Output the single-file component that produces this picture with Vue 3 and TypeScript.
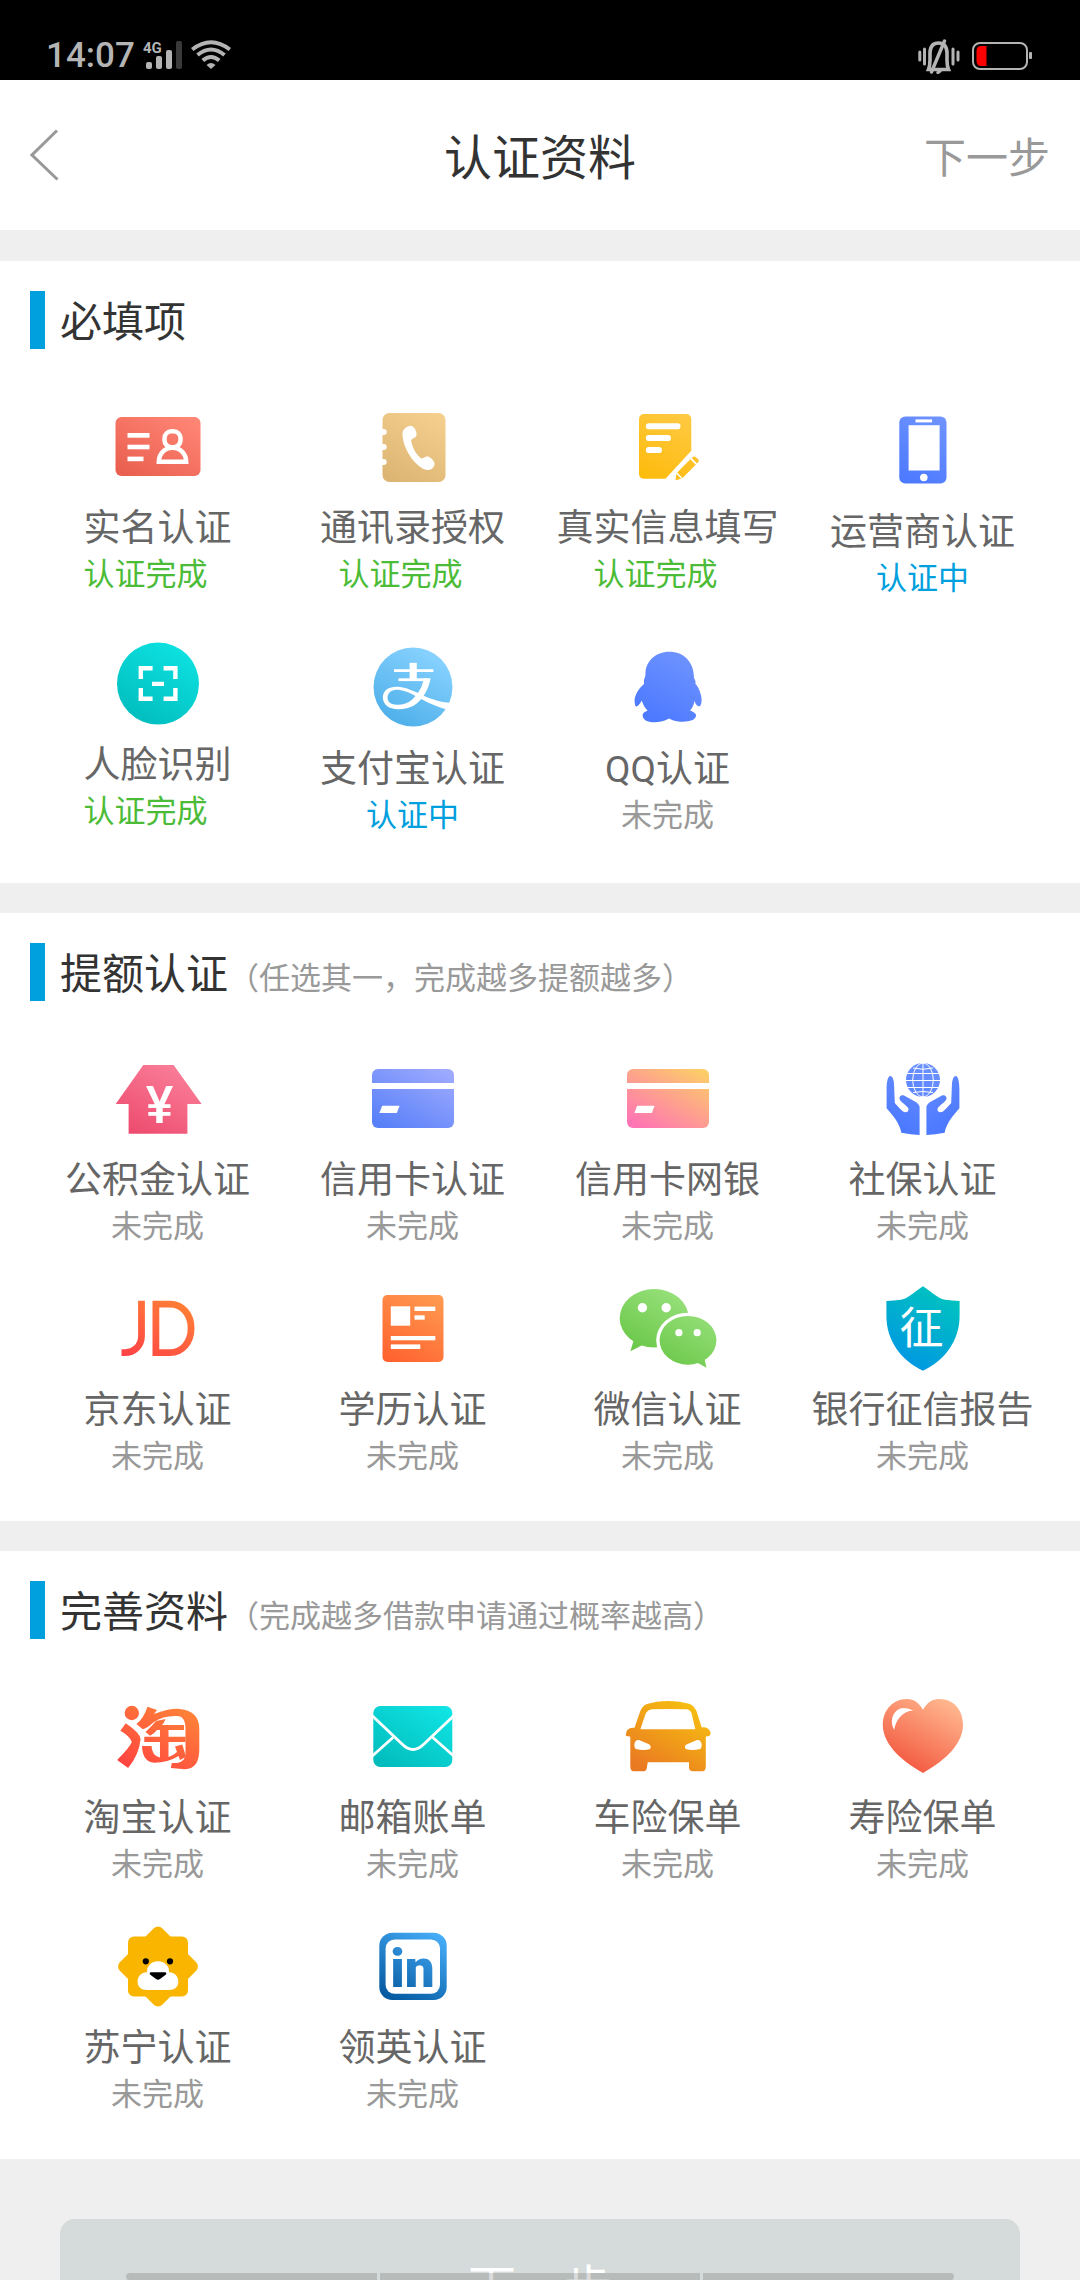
<script setup lang="ts">
type Status = 'done' | 'pending' | 'todo'

interface Icon {
  from: string
  to: string
  body: string
}

interface Item {
  icon: string
  label: string
  status: Status
}

interface Section {
  title: string
  note?: string
  items: Item[]
}

const statusText: Record<Status, string> = {
  done: '认证完成',
  pending: '认证中',
  todo: '未完成',
}

const cardBody = `
  <rect x="9" y="20" width="82" height="59" rx="6"/>
  <g fill="#fff"><rect x="8" y="34" width="84" height="6"/><path d="M19.2 56.7H36.6L33.8 64H16.4z"/></g>`

const hand =
  'M17.4 27C14.5 27 13.6 34 13.6 41V59.3C20 67 26 73 28.4 83.7Q38 85.7 46.6 86V57.7Q46 54.5 41 52L31 46.6C27.5 45.5 25.5 48.5 27 51C30 55 35 57 35.5 60C36 63 33 64 30 62.5Q26 59 21.8 54L21 34Q20 27 17.4 27z'

const icons: Record<string, Icon> = {
  idcard: {
    from: '#ea6050',
    to: '#ff8575',
    body: `<rect x="7.5" y="20" width="85" height="59" rx="6"/>
      <g fill="#fff"><rect x="19.5" y="36" width="22" height="4.7"/><rect x="19.5" y="47.7" width="22" height="4.6"/><rect x="19.5" y="59.6" width="16" height="4.6"/></g>
      <g fill="none" stroke="#fff" stroke-width="4.5"><rect x="56.5" y="34.2" width="16" height="16" rx="7"/><path d="M50.8 64.7C51 56.5 57 50.8 64.5 50.8S78 56.5 78.2 64.7z"/></g>`,
  },
  contacts: {
    from: '#dcb573',
    to: '#f5cf8e',
    body: `<rect x="19.5" y="16" width="63" height="69" rx="7"/>
      <g fill="#fff"><rect x="17" y="32" width="6.7" height="6" rx="3"/><rect x="17" y="47" width="6.7" height="6" rx="3"/><rect x="17" y="62" width="6.7" height="6" rx="3"/>
      <path d="M47.5 28.7C51 28.5 54 34 53.5 38.5C52 41.5 49 41 48.2 43.5C49 50 53 57 57.5 61C60 62.5 62 59.5 64.2 59.3C68 60 72.5 65 71.5 68C70 72 67 73.5 64.2 73C52 71 39 50 39.5 36C40 32 44 29 47.5 28.7z"/></g>`,
  },
  form: {
    from: '#fdbb0c',
    to: '#ffca45',
    body: `<path d="M26.5 17H67.8Q73.3 17 73.3 22.5V53.7L47.5 81.7H26.5Q21 81.7 21 76.2V22.5Q21 17 26.5 17z"/>
      <path d="M72.3 62.3L77.8 67.7L64.6 81L59.2 75.6zM73.6 61L75.4 59.8Q76.8 59 78.2 60.4L80.4 62.5Q81.4 63.8 80.4 65L79 66.5zM58.4 77L63.3 81.8L57.5 83.3z"/>
      <g fill="#fff"><rect x="27.9" y="26.2" width="34.6" height="6" rx="2.8"/><rect x="27.9" y="38" width="25" height="6" rx="2.8"/><rect x="27.9" y="50" width="16" height="6" rx="2.8"/></g>`,
  },
  phone: {
    from: '#4a78ff',
    to: '#7094ff',
    body: `<rect x="26.3" y="15.5" width="47.2" height="67" rx="6"/>
      <g fill="#fff"><rect x="35.6" y="24.2" width="31" height="45.3"/><rect x="42.5" y="18.4" width="16.6" height="3"/><circle cx="50.8" cy="76.5" r="3.8"/></g>`,
  },
  face: {
    from: '#02bfc0',
    to: '#0de0e0',
    body: `<circle cx="50" cy="49.6" r="41"/>
      <g fill="none" stroke="#fff" stroke-width="4.4"><path d="M44.6 34.2H32.8V45M55.6 34.2H67.4V45M44.6 64.8H32.8V54M55.6 64.8H67.4V54M44 49.9H56"/></g>`,
  },
  alipay: {
    from: '#4fb0ea',
    to: '#88d2ff',
    body: `<circle cx="50" cy="49" r="39.5"/>
      <g fill="#fff"><rect x="46.6" y="24.8" width="7.2" height="17"/><rect x="31" y="31.2" width="39.4" height="2.8"/><rect x="35.4" y="40.3" width="29" height="2.8"/>
      <path d="M60.5 40.3H67.6C66 50 60.5 61.5 51 67.5C43 72 29 72.5 24 68C18.5 63.5 18.5 55.5 23.5 51.5C31 46.5 42 48.5 57 56C67 61 77 64.3 88.5 65L83 71.2C74 69 63 64 53 58.3C41 51.5 31 49.8 26.5 54.5C23.3 58 24 63.5 28.5 65.8C35 68.2 44 66.2 49.5 61.2C55.5 55.5 59 49 60.5 42z"/></g>`,
  },
  qq: {
    from: '#4a78ff',
    to: '#7094ff',
    body: `<path d="M51 13.8C38 13.8 28 23 27.5 35Q27.8 38 26 42V46C20 51 16.5 58 16.6 63C16.8 67 17.5 69 18.5 68.5C21 67.5 22.5 65 23.8 62.5C25 67 27 70 29.6 72.5C26 74 24.6 75.5 24.6 77.5C25 83 31 84.2 37 84.2C44 84 47 82.5 51 80.5C55 82.5 58 83.7 65 83.7C72 83.5 77.5 82 78.2 77.5C78 75 75.5 74 72 72.5C74.5 70 75.8 67 76.4 63C77.5 66 79 68 81 68.5C83 68 83.6 65 83.6 61C83 55 80.5 49 77.5 46Q78.2 43 76 40C76 24 66 13.8 51 13.8z"/>`,
  },
  fund: {
    from: '#ee4d70',
    to: '#fa809a',
    body: `<path d="M35.3 16H65.6L93.6 55H79.4V84.7H20.6V55H7.7z"/>
      <text x="51.5" y="74" font-family="Roboto" font-weight="500" font-size="52" text-anchor="middle" fill="#fff">¥</text>`,
  },
  credit: { from: '#5880f8', to: '#9eaaff', body: cardBody },
  bank: { from: '#ff74b4', to: '#fccd68', body: cardBody },
  social: {
    from: '#4a78ff',
    to: '#7094ff',
    body: `<path d="${hand}"/><path transform="translate(100 0) scale(-1 1)" d="${hand}"/>
      <circle cx="50" cy="31" r="17"/>
      <g fill="none" stroke="#fff" stroke-width="1"><ellipse cx="50" cy="31" rx="10.3" ry="17"/><path d="M50 14V48M33 31.5H67M34 24.5H66M34 38.5H66M40 19Q50 21.5 60 19M40 43.5Q50 41.5 60 43.5"/></g>`,
  },
  jd: {
    from: '#ff4246',
    to: '#ff8434',
    body: `<g fill="none" stroke="url(#grad-jd)" stroke-width="6.8"><path d="M33.5 21.7V57C33.5 67 26 73.6 17 73.6H13.5"/><path d="M47.9 25.1H62C74.5 25.1 83.1 35.5 83.1 49.3C83.1 63 74.5 73.6 62 73.6H47.9z"/></g>`,
  },
  diploma: {
    from: '#ff622f',
    to: '#ff9a50',
    body: `<rect x="19.5" y="16" width="61" height="67" rx="5"/>
      <g fill="#fff"><rect x="27.8" y="27.3" width="19.4" height="19.4"/><rect x="51.5" y="27.6" width="20.8" height="4.4"/><rect x="51.5" y="36.3" width="10.2" height="4.4"/><rect x="27.8" y="57" width="44.5" height="4.3"/><rect x="27.8" y="65.4" width="29.5" height="4.6"/></g>`,
  },
  wechat: {
    from: '#68c646',
    to: '#9ae27e',
    body: `<ellipse cx="36.2" cy="39.2" rx="34.5" ry="29.2"/><path d="M15.5 61.7L12.4 72.3L24.1 66.3L26 58z"/>
      <ellipse cx="70" cy="61.3" rx="31.8" ry="27.6" fill="#fff"/>
      <ellipse cx="70" cy="61.3" rx="28.4" ry="24.4"/><path d="M86.4 79.5L88.5 88.7L79.9 84L78 78z"/>
      <g fill="#fff"><circle cx="24.4" cy="28.7" r="4.7"/><circle cx="48.2" cy="28.7" r="4.7"/><circle cx="60.9" cy="53.7" r="3.6"/><circle cx="79.2" cy="53.7" r="3.6"/></g>`,
  },
  report: {
    from: '#0098e2',
    to: '#00c2c0',
    body: `<path d="M50 7.3C58 12 64 19.5 72 20.7Q79 21.8 86.6 22V36C87 62 71 82 50 91.7C29 82 13 62 13.4 36V22Q21 21.8 28 20.7C36 19.5 42 12 50 7.3z"/>
      <text x="48.5" y="65" font-family="'Noto Sans CJK SC'" font-weight="400" font-size="44" text-anchor="middle" fill="#fff">征</text>`,
  },
  taobao: {
    from: '#ff4540',
    to: '#ff8438',
    body: `<circle cx="23.8" cy="26" r="7.2"/>
      <path d="M17.8 36.3Q32 46 32.6 52Q31 68 20.1 81L9.1 73Q22 60 23.8 55Q22 49 12.3 43.7z"/>
      <path d="M46 27Q62 21 72 22Q91.3 24 91.3 42V63Q91 84 74 82L62.8 81L63.8 76Q77.5 77 77.5 66V42Q77.5 29 69 29Q55 28.5 46 35Q40 40.5 34.8 42.3L28.4 37Q36 31 39.4 19.7L49 23z"/>
      <path d="M54 38H76V43H60.5V49.7H77.5V55H60.5V70Q66 68 69 65L67 59.5L74.3 57.5L78 69.7L72 73L70.5 69Q60 75.7 46.3 75.7Q34.5 75 34 59H43.5Q44 69 52 70.5V55H36.3V49.7H52V43H49Q46 47 42.2 48.7L37.5 45Q44 39 48 34L57.5 32Q56 36 54 38z"/>`,
  },
  mail: {
    from: '#02bcbc',
    to: '#10e4e4',
    body: `<rect x="10.3" y="19" width="79" height="61" rx="7"/>
      <g fill="none" stroke="#fff" stroke-width="2.8"><path d="M9 28.5L39 57Q50 68 61 57L91 28.5M30 50.5L9 69.2M69.8 50.5L91 69.2"/></g>`,
  },
  car: {
    from: '#ea7a22',
    to: '#f6bf10',
    body: `<path d="M50 14Q62 14.2 71 16.8Q76 18.5 78.5 24L83.7 40.5Q90 39.5 92.4 45Q93.4 49.5 87.8 49.5V79Q87.8 84.3 84.5 84.3H75Q71 84.3 71 80.5V75.3H29.7L28.8 81.5Q28 84.3 25.5 84.3H15.5Q12.3 84.3 12.3 79V49.7L7.8 48.8Q7.6 40 16.5 40.7L22.5 23.5Q25 18 30 16.8Q38 14.3 50 14z"/>
      <g fill="#fff"><path d="M34 22.2Q50 21.6 68.8 22.3Q72.6 22.7 73.8 27L77.3 42.3H22.4L27.5 27Q29.3 22.7 34 22.2z"/><path d="M16.3 58Q16.8 52.5 21 53L31 57.2Q33.6 58.8 32.2 62Q26 63.6 19 62.3Q16.3 62 16.3 58zM83.7 58Q83.2 52.5 79 53L68.5 57.6Q66 59 67.6 62Q74 63.6 81 62.3Q83.7 62 83.7 58z"/></g>`,
  },
  heart: {
    from: '#f2553d',
    to: '#ffb48c',
    body: `<path d="M50 22.7C54 16 59 12 66 12C81 12 90 23 90 38C90 55 75 72 50 86C25 72 9.8 55 9.8 38C9.8 23 20 12 34 12C41 12 46 16 50 22.7z"/>
      <path fill="#fff" d="M40.3 23.6Q33 19.5 26.5 21.8C18.5 25.5 17 36 21.2 43C22.5 34 29 24 40.3 23.6z"/>`,
  },
  suning: {
    from: '#f9b500',
    to: '#f9b500',
    body: `<rect x="20" y="19.5" width="60" height="60" rx="6"/><rect x="20" y="19.5" width="60" height="60" rx="6" transform="rotate(45 50 49.5)"/>
      <path fill="#fff" d="M50 44.3C56.5 44.3 61.5 49 61 55.3C67 55.5 70.3 59.5 70.3 64.5C70.3 70 67 73 61 73H39C33 73 29.6 70 29.6 64.5C29.6 59.5 33 55.5 39 55.3C38.5 49 43.5 44.3 50 44.3z"/>
      <g fill="#000"><circle cx="37.8" cy="44.3" r="3.1"/><circle cx="62" cy="44.3" r="3.1"/><path d="M42.5 55.2H57.5Q59 56 58 57.5L52 62Q50 63.5 48 62L42 57.5Q41 56 42.5 55.2z"/></g>`,
  },
  linkedin: {
    from: '#0459a0',
    to: '#46adf8',
    body: `<rect x="16.3" y="15.7" width="67.4" height="67.4" rx="13"/><rect x="22.6" y="22.4" width="54.4" height="54.4" rx="9" fill="#fff"/>
      <text x="49.5" y="70" font-family="Roboto" font-weight="900" font-size="53" text-anchor="middle" fill="url(#grad-linkedin)">in</text>`,
  },
}

const sections: Section[] = [
  {
    title: '必填项',
    items: [
      { icon: 'idcard', label: '实名认证', status: 'done' },
      { icon: 'contacts', label: '通讯录授权', status: 'done' },
      { icon: 'form', label: '真实信息填写', status: 'done' },
      { icon: 'phone', label: '运营商认证', status: 'pending' },
      { icon: 'face', label: '人脸识别', status: 'done' },
      { icon: 'alipay', label: '支付宝认证', status: 'pending' },
      { icon: 'qq', label: 'QQ认证', status: 'todo' },
    ],
  },
  {
    title: '提额认证',
    note: '（任选其一，完成越多提额越多）',
    items: [
      { icon: 'fund', label: '公积金认证', status: 'todo' },
      { icon: 'credit', label: '信用卡认证', status: 'todo' },
      { icon: 'bank', label: '信用卡网银', status: 'todo' },
      { icon: 'social', label: '社保认证', status: 'todo' },
      { icon: 'jd', label: '京东认证', status: 'todo' },
      { icon: 'diploma', label: '学历认证', status: 'todo' },
      { icon: 'wechat', label: '微信认证', status: 'todo' },
      { icon: 'report', label: '银行征信报告', status: 'todo' },
    ],
  },
  {
    title: '完善资料',
    note: '（完成越多借款申请通过概率越高）',
    items: [
      { icon: 'taobao', label: '淘宝认证', status: 'todo' },
      { icon: 'mail', label: '邮箱账单', status: 'todo' },
      { icon: 'car', label: '车险保单', status: 'todo' },
      { icon: 'heart', label: '寿险保单', status: 'todo' },
      { icon: 'suning', label: '苏宁认证', status: 'todo' },
      { icon: 'linkedin', label: '领英认证', status: 'todo' },
    ],
  },
]
</script>

<template>
  <div class="app">
    <div class="statusbar">
      <div class="status-left">
        <span class="clock">14:07</span>
        <svg class="signal" width="42" height="40" viewBox="-2 -3 42 40" aria-hidden="true">
          <text x="-1" y="14" font-family="Roboto" font-weight="700" font-size="15" fill="#b4b4b4">4G</text>
          <g fill="#b4b4b4">
            <rect x="2" y="23" width="6" height="7" rx="2" />
            <rect x="12" y="17" width="6" height="13" rx="2" />
            <rect x="22" y="11" width="6" height="19" rx="2" />
          </g>
          <rect x="32" y="2" width="6" height="28" rx="2" fill="#3a3a3a" />
        </svg>
        <svg class="wifi" width="40" height="32" viewBox="0 1 40 32" aria-hidden="true">
          <g fill="none" stroke="#b4b4b4" stroke-width="4">
            <path d="M1.2 10.5Q20 -4 38.8 10.5" />
            <path d="M6.5 16Q20 5 33.5 16" />
            <path d="M11.8 21.5Q20 14.5 28.2 21.5" />
          </g>
          <path d="M15.5 26Q20 22 24.5 26L20 30z" fill="#b4b4b4" />
        </svg>
      </div>
      <div class="status-right">
        <svg width="42" height="36" viewBox="0 0 42 36" aria-hidden="true">
          <g fill="none" stroke="#b4b4b4" stroke-width="3" stroke-linecap="round">
            <path d="M1.8 14V22M6.5 11V26M35 11V26M40 14V22" />
            <path d="M10.5 31.5Q12 28 12 22V14.5Q12.5 5 20.5 5T29 14.5V22Q29 28 30.5 31.5z" stroke-width="3.6" stroke-linecap="butt" />
            <path d="M13.5 34L26.5 3M20 34.5L22 33" stroke-width="3.4" />
          </g>
        </svg>
        <svg width="62" height="30" viewBox="0 0 62 30" aria-hidden="true">
          <rect x="1" y="2" width="54" height="26" rx="7" fill="none" stroke="#b4b4b4" stroke-width="2" />
          <rect x="57" y="11" width="3" height="7" rx="1" fill="#b4b4b4" />
          <path d="M14.5 5V25H9Q4.5 25 4.5 20V10Q4.5 5 9 5z" fill="#f00" />
        </svg>
      </div>
    </div>

    <header class="header">
      <button class="back" type="button" aria-label="返回">
        <svg width="30" height="52" viewBox="0 0 30 52" aria-hidden="true">
          <path d="M27 1.5L2 26L27.5 50.5" fill="none" stroke="#999" stroke-width="3" />
        </svg>
      </button>
      <h1 class="title">认证资料</h1>
      <button class="next" type="button">下一步</button>
    </header>

    <main class="content">
      <section v-for="section in sections" :key="section.title" class="section">
        <div class="section-head">
          <h2 class="section-title">{{ section.title }}</h2>
          <span v-if="section.note" class="section-note">{{ section.note }}</span>
        </div>
        <div class="grid">
          <button v-for="item in section.items" :key="item.icon" type="button" class="item" :class="item.status">
            <svg class="icon" viewBox="0 0 100 100" aria-hidden="true">
              <defs>
                <linearGradient :id="`grad-${item.icon}`" gradientUnits="userSpaceOnUse" x1="32" y1="85" x2="72" y2="15">
                  <stop offset="0" :stop-color="icons[item.icon].from" />
                  <stop offset="1" :stop-color="icons[item.icon].to" />
                </linearGradient>
              </defs>
              <g :fill="`url(#grad-${item.icon})`" v-html="icons[item.icon].body"></g>
            </svg>
            <span class="label">{{ item.label }}</span>
            <span class="status">{{ statusText[item.status] }}</span>
          </button>
        </div>
      </section>
      <div class="footer">
        <button class="submit" type="button">下一步</button>
      </div>
    </main>

    <div class="gesture" aria-hidden="true"><i></i><i></i><i></i></div>
  </div>
</template>

<style>
body {
  margin: 0;
  background: #efefef;
}
</style>

<style scoped>
.app {
  display: flex;
  flex-direction: column;
  height: 100vh;
  background: #efefef;
  color: #333;
  font-family: Roboto, "Noto Sans CJK SC", sans-serif;
}

button {
  margin: 0;
  padding: 0;
  border: 0;
  background: none;
  color: inherit;
  font: inherit;
  cursor: pointer;
}

.statusbar {
  display: flex;
  flex: none;
  justify-content: space-between;
  align-items: flex-end;
  box-sizing: border-box;
  height: 80px;
  padding: 0 46px 4px;
  background: #000;
  color: #b4b4b4;
}

.status-left,
.status-right {
  display: flex;
  align-items: center;
  height: 40px;
}

.clock {
  font-size: 35px;
  font-weight: 500;
  line-height: 40px;
}

.signal {
  margin: 0 7px;
}

.status-right {
  gap: 12px;
}

.header {
  display: grid;
  flex: none;
  grid-template-columns: 1fr auto 1fr;
  align-items: center;
  height: 150px;
  padding: 0 30px;
  background: #fff;
}

.back {
  justify-self: start;
  display: flex;
}

.title,
.next {
  padding-top: 7px;
  line-height: 60px;
}

.title {
  margin: 0;
  font-size: 48px;
  font-weight: 400;
}

.next {
  justify-self: end;
  color: #999;
  font-size: 42px;
}

.content {
  flex: 1;
  min-height: 0;
  overflow-y: auto;
  scrollbar-width: none;
}

.section {
  margin-top: 30px;
  padding: 30px 30px 32px;
  background: #fff;
}

.section:first-child {
  margin-top: 31px;
}

.section-head {
  display: flex;
  align-items: baseline;
  height: 58px;
  margin-bottom: 28px;
  border-left: 15px solid #009fdd;
  padding-left: 15px;
  line-height: 64px;
}

.section-title {
  margin: 0;
  font-size: 42px;
  font-weight: 400;
}

.section-note {
  color: #999;
  font-size: 31px;
}

.grid {
  display: grid;
  grid-template-columns: repeat(4, 1fr);
  align-items: center;
}

.item {
  display: flex;
  flex-direction: column;
  align-items: center;
  padding: 20px 0 10px;
  white-space: nowrap;
}

.item.done {
  padding-bottom: 17px;
}

.icon {
  width: 100px;
  height: 100px;
  margin-bottom: 8px;
}

.label {
  color: #666;
  font-size: 37px;
  line-height: 48px;
}

.status {
  color: #999;
  font-size: 31px;
  line-height: 44px;
}

.done .status {
  width: 148px;
  color: #4cbc38;
  text-align: left;
}

.pending .status {
  color: #009fdd;
}

.footer {
  padding: 60px;
}

.submit {
  display: block;
  width: 100%;
  height: 130px;
  border-radius: 15px;
  background: #d5dbda;
  color: #fff;
  font-size: 48px;
}

.gesture {
  position: fixed;
  right: 126px;
  bottom: 0;
  left: 126px;
  display: grid;
  grid-template-columns: 251fr 320fr 251fr;
  gap: 3px;
  height: 7px;
  pointer-events: none;
}

.gesture i {
  background: rgba(0, 0, 0, 0.14);
}

.gesture i:first-child {
  border-radius: 4px 0 0 4px;
}

.gesture i:last-child {
  border-radius: 0 4px 4px 0;
}
</style>
